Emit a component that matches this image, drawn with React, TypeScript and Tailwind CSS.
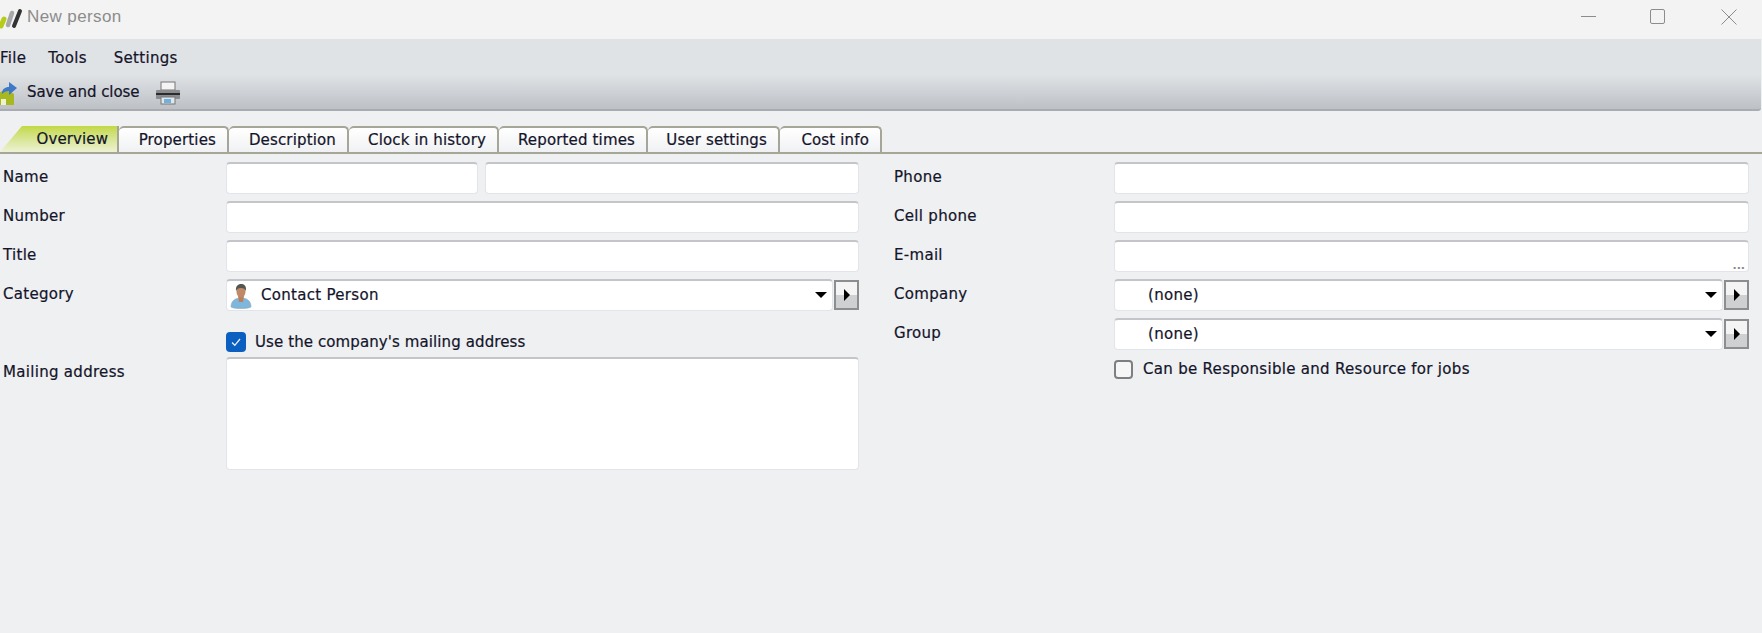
import React from "react";

const Field = ({ className = "", children }: { className?: string; children?: React.ReactNode }) => (
  <div className={`relative flex items-center h-[32px] bg-white rounded-[4px] border border-[#e1e4e9] border-t-[#c3c5c9] border-t-2 ${className}`}>
    {children}
  </div>
);

const Row = ({ label, children }: { label: string; children: React.ReactNode }) => (
  <div className="flex items-center h-[32px]">
    <div className="w-[223px] shrink-0 pb-[1px]">{label}</div>
    {children}
  </div>
);

const RRow = ({ label, children }: { label: string; children: React.ReactNode }) => (
  <div className="flex items-center h-[32px]">
    <div className="w-[220px] shrink-0 pb-[1px]">{label}</div>
    {children}
  </div>
);

const Arrow = () => (
  <div className="absolute right-[5px] top-[11px] w-0 h-0 border-x-[6px] border-x-transparent border-t-[6px] border-t-black" />
);

const Combo = ({ children }: { children?: React.ReactNode }) => (
  <div className="flex flex-1 items-center gap-[1px]">
    <Field className="flex-1">
      {children}
      <Arrow />
    </Field>
    <div className="flex h-[30px] w-[25px] shrink-0 items-center justify-center border-2 border-[#8b8d8f] bg-gradient-to-b from-[#f4f4f4] from-50% to-[#cfd0d1] to-50%">
      <div className="h-0 w-0 border-y-[6px] border-y-transparent border-l-[6px] border-l-black" />
    </div>
  </div>
);

const tabs: [string, string][] = [
  ["Properties", "w-[110px]"],
  ["Description", "w-[120px]"],
  ["Clock in history", "w-[150px]"],
  ["Reported times", "w-[149px]"],
  ["User settings", "w-[132px]"],
  ["Cost info", "w-[102px]"],
];

const PersonIcon = () => (
  <svg width="22" height="26" viewBox="0 0 22 26" className="ml-[3px] shrink-0">
    <path d="M1 24c0-6 4-9 10-9s10 3 10 9c-3 2-17 2-20 0z" fill="#7fb6dc" stroke="#8fa7b8" strokeWidth=".6" />
    <path d="M8 13h6l-1 6h-4z" fill="#b9805e" />
    <ellipse cx="11" cy="8.500" rx="4.500" ry="6" fill="#c08a68" />
    <path d="M6 8C5.500 3 8 1 11 1s5.500 1.500 5 7c-1-2-2-3-5-3S7 6 6 8z" fill="#55554f" />
  </svg>
);

export default function App() {
  return (
    <div className="flex h-[633px] w-[1762px] flex-col overflow-hidden bg-[#eef0f2] font-['DejaVu_Sans',sans-serif] text-[15px] tracking-[0.3px] text-[#14142a] [-webkit-text-stroke:0.2px_#14142a]">
      {/* Title bar */}
      <div className="flex h-[39px] shrink-0 items-center bg-[#f3f3f3] pb-[6px] [-webkit-text-stroke:0]">
        <svg width="24" height="24" viewBox="0 0 24 24" className="shrink-0">
          <path d="M1 21 L4 14" stroke="#b5cc18" strokeWidth="5" strokeLinecap="round" />
          <path d="M8 20 L12 8" stroke="#a8a8a8" strokeWidth="4.500" strokeLinecap="round" />
          <path d="M14 21 L20 6" stroke="#333333" strokeWidth="4" strokeLinecap="round" />
        </svg>
        <span className="ml-[3px] font-['Liberation_Sans',sans-serif] text-[17px] tracking-[0.4px] text-[#8c8c8c]">New person</span>
        <div className="ml-auto flex items-center pr-[25px]">
          <div className="h-px w-[15px] bg-[#8c8c8c]" />
          <div className="ml-[54px] h-[15px] w-[15px] rounded-[2px] border border-[#8c8c8c]" />
          <svg width="16" height="16" viewBox="0 0 16 16" className="ml-[56px]">
            <path d="M.5.5l15 15M15.500.5l-15 15" stroke="#8c8c8c" strokeWidth="1" />
          </svg>
        </div>
      </div>

      {/* Menu + toolbar */}
      <div className="mr-px flex h-[72px] shrink-0 flex-col rounded-br-[3px] border-b-2 border-[#a9adb2] bg-gradient-to-b from-[#e0e3e6] from-50% to-[#bdc1c6]">
        <div className="flex h-[37px] items-center pt-[2px]">
          <span>File</span>
          <span className="ml-[22px]">Tools</span>
          <span className="ml-[27px]">Settings</span>
        </div>
        <div className="flex h-[33px] items-center">
          <svg width="18" height="26" viewBox="0 0 18 26" className="shrink-0">
            <path d="M-3 14 L6 9 L14 14 V25 H-3z" fill="#a8b820" />
            <rect x="1" y="19" width="5" height="6" fill="#eef2d0" />
            <path d="M2 14c0-5 3-7 7-7V2l8 6-8 7v-4c-3 0-5 1-7 3z" fill="#3f78c8" />
          </svg>
          <span className="ml-[9px] tracking-[-0.05px]">Save and close</span>
          <svg width="26" height="26" viewBox="0 0 26 26" className="ml-[15px] shrink-0">
            <rect x="6" y="2" width="14" height="8" fill="#f4f4f4" stroke="#777" strokeWidth="1" />
            <rect x="1" y="10" width="24" height="9" rx="1" fill="#8a8c90" />
            <rect x="1" y="13" width="24" height="2" fill="#2b2b2d" />
            <rect x="6" y="17" width="14" height="7" fill="#dfe6ec" stroke="#777" strokeWidth="1" />
            <rect x="9" y="19" width="7" height="4" fill="#6fb0dc" />
          </svg>
        </div>
      </div>

      {/* Tabs */}
      <div className="mt-[15px] flex h-[28px] shrink-0 items-stretch border-b-2 border-[#a5a698]">
        <div className="relative flex h-[26px] w-[119px] items-center justify-end border-r-2 border-[#a5a698] bg-gradient-to-b from-[#c3d83e] to-[#eef2d4] pr-[9px] pt-[1px] tracking-[0.1px] [clip-path:polygon(0_100%,22px_0,100%_0,100%_100%)]">
          Overview
        </div>
        {tabs.map(([t, w]) => (
          <div
            key={t}
            className={`flex h-[26px] items-center justify-end rounded-t-[5px] border-t-2 border-r-2 border-[#a5a698] bg-gradient-to-b from-white to-[#f0f1f3] pr-[11px] pt-[1px] tracking-[0.15px] ${w}`}
          >
            {t}
          </div>
        ))}
      </div>

      {/* Form */}
      <div className="flex flex-1 items-start pl-[3px] pt-[8px]">
        <div className="flex w-[856px] shrink-0 flex-col gap-[7px]">
          <Row label="Name">
            <div className="flex flex-1 gap-[7px]">
              <Field className="w-[252px]" />
              <Field className="flex-1" />
            </div>
          </Row>
          <Row label="Number"><Field className="flex-1" /></Row>
          <Row label="Title"><Field className="flex-1" /></Row>
          <Row label="Category">
            <Combo>
              <PersonIcon />
              <span className="ml-[9px]">Contact Person</span>
            </Combo>
          </Row>
          <div className="mt-[13px] flex items-center pl-[223px]">
            <div className="flex h-[20px] w-[20px] items-center justify-center rounded-[4px] bg-[#0b5fc0]">
              <svg width="12" height="12" viewBox="0 0 12 12">
                <path d="M2 6.500l2.800 2.800L10 3" fill="none" stroke="#e8f0fa" strokeWidth="1.300" />
              </svg>
            </div>
            <span className="ml-[9px] tracking-[0.1px]">Use the company's mailing address</span>
          </div>
          <div className="mt-[-4px] flex items-start">
            <div className="w-[223px] shrink-0 pt-[4px]">Mailing address</div>
            <Field className="h-[113px] flex-1" />
          </div>
        </div>

        <div className="ml-[35px] flex w-[855px] flex-col gap-[7px]">
          <RRow label="Phone"><Field className="flex-1" /></RRow>
          <RRow label="Cell phone"><Field className="flex-1" /></RRow>
          <RRow label="E-mail">
            <Field className="flex-1">
              <span className="absolute bottom-[1px] right-[3px] text-[11px] font-bold leading-[9px] tracking-[0px] text-[#8a8a8a] [-webkit-text-stroke:0]">...</span>
            </Field>
          </RRow>
          <RRow label="Company"><Combo><span className="ml-[33px]">(none)</span></Combo></RRow>
          <RRow label="Group"><Combo><span className="ml-[33px]">(none)</span></Combo></RRow>
          <div className="mt-[1px] flex items-center pl-[220px]">
            <div className="h-[19px] w-[19px] rounded-[4px] border-2 border-[#7d7f82] bg-[#f6f6f7]" />
            <span className="ml-[10px]">Can be Responsible and Resource for jobs</span>
          </div>
        </div>
      </div>
    </div>
  );
}
